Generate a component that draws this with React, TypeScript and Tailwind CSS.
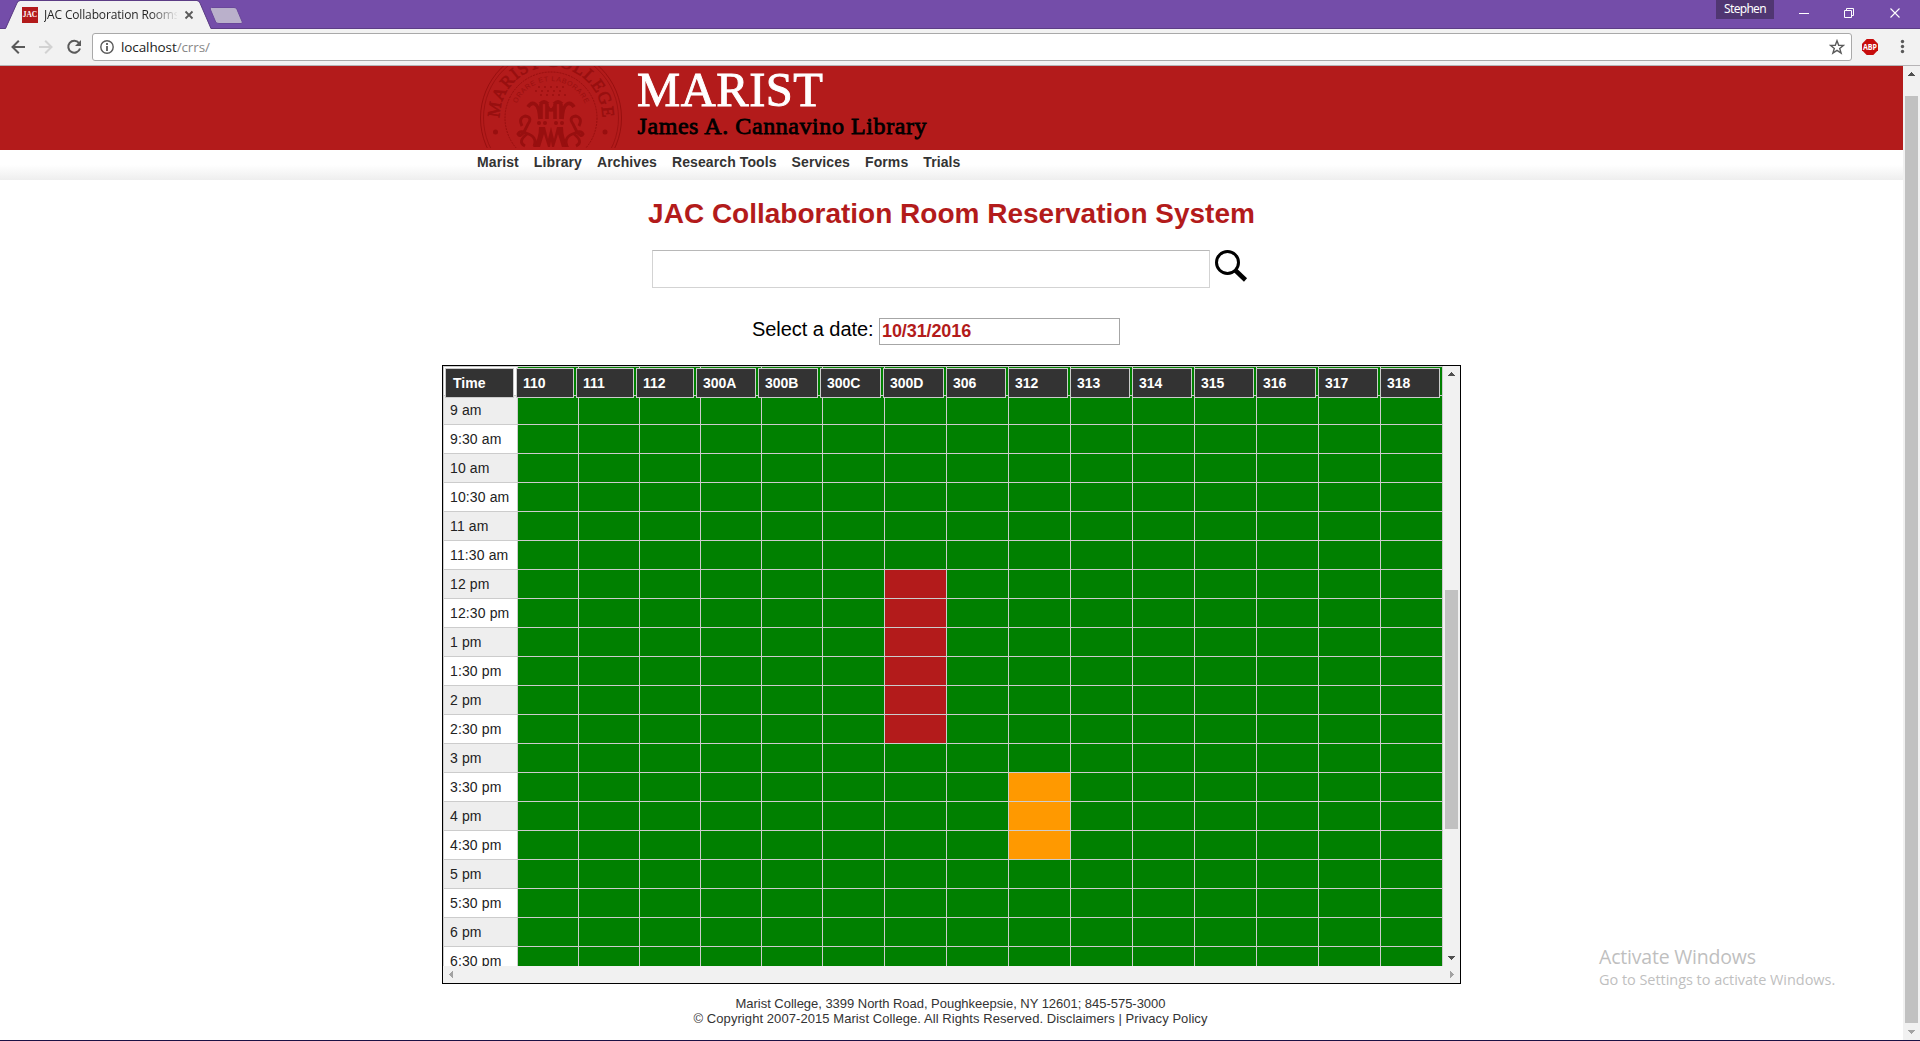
import React from "react";

const rooms = ["110", "111", "112", "300A", "300B", "300C", "300D", "306", "312", "313", "314", "315", "316", "317", "318"];

const times = [
  "8:30 am", "9 am", "9:30 am", "10 am", "10:30 am", "11 am", "11:30 am", "12 pm", "12:30 pm", "1 pm", "1:30 pm",
  "2 pm", "2:30 pm", "3 pm", "3:30 pm", "4 pm", "4:30 pm", "5 pm", "5:30 pm", "6 pm", "6:30 pm",
];

const reserved: Record<string, string[]> = {
  "300D": ["12 pm", "12:30 pm", "1 pm", "1:30 pm", "2 pm", "2:30 pm"],
};
const pending: Record<string, string[]> = {
  "312": ["3:30 pm", "4 pm", "4:30 pm"],
};

const headerSizes = [
  "w-[58px] ml-[2px]", "w-[58px] ml-[2px]", "w-[58px] ml-[2px]", "w-[60px] ml-[2px]", "w-[60px] ml-[2px]", "w-[61px] ml-[2px]",
  "w-[61px] ml-[2px]", "w-[60px] ml-[2px]", "w-[60px] ml-[2px]", "w-[60px] ml-[2px]", "w-[60px] ml-[2px]",
  "w-[60px] ml-[2px]", "w-[60px] ml-[2px]", "w-[60px] ml-[2px]", "w-[60px] ml-[2px]",
];

function cellColor(room: string, time: string) {
  if (reserved[room]?.includes(time)) return "bg-[#b31b1b]";
  if (pending[room]?.includes(time)) return "bg-[#ff9900]";
  return "bg-[#008000]";
}

function Arrow({ dir, color }: { dir: "up" | "down" | "left" | "right"; color: string }) {
  const d = {
    up: "M8 6h1v1h1v1h1v1h1v1H5V9h1V8h1V7h1z",
    down: "M5 7h7v1h-1v1h-1v1H9v1H8v-1H7V9H6V8H5z",
    left: "M6 8h1V7h1V6h1V5h1v7H9v-1H8v-1H7V9H6z",
    right: "M7 5h1v1h1v1h1v1h1v1h-1v1H9v1H8v1H7z",
  }[dir];
  return (
    <svg width="17" height="17" viewBox="0 0 17 17" shapeRendering="crispEdges" className="block shrink-0">
      <path d={d} fill={color} />
    </svg>
  );
}

function BrowserChrome() {
  return (
    <div className="font-['Open_Sans',sans-serif]">
      <div className="relative flex h-[29px] border-b border-[#5c3d85] bg-[#744da9]">
        <svg width="250" height="29" viewBox="0 0 250 29" className="absolute left-0 top-0">
          <path d="M5.500 29 L17 3 Q18 1 20 1 H197 Q199 1 200 3 L211 29 Z" fill="#f2f2f2" />
          <path d="M5.500 28.500 L17 3 Q18 .5 20 .5 H197 Q199 .5 200 3 L211 28.500" fill="none" stroke="#5c3d85" />
          <path d="M211.500 7.500 H234 Q236 7.500 236.800 9 L242.300 22 Q242.800 23.500 241 23.500 H219 Q216.500 23.500 215.700 22 L210.200 9 Q209.800 7.500 211.500 7.500Z" fill="#bab0cb" stroke="#6a479b" />
          <path d="M185.500 11.500l7 7m0-7l-7 7" stroke="#5a5a5a" strokeWidth="1.800" />
        </svg>
        <div className="relative ml-[22px] mt-[7px] flex h-4 w-4 items-center justify-center bg-[#b31b1b] font-['Liberation_Serif',serif] text-[7.500px] font-bold leading-none text-white">JAC</div>
        <div className="relative ml-[6px] mt-[6px] w-[133px] overflow-hidden whitespace-nowrap bg-linear-to-r from-[#222] from-80% to-[#22222210] bg-clip-text text-[12px] leading-[17px] tracking-[-0.150px] text-transparent">JAC Collaboration Rooms</div>
        <div className="ml-auto mr-[146px] h-[19px] w-[58px] bg-[#503672] text-center font-['Noto_Sans',sans-serif] text-[12px] leading-[18px] tracking-[-0.700px] text-white">Stephen</div>
        <svg width="146" height="28" viewBox="0 0 146 28" className="absolute right-0 top-0" fill="none" stroke="#fff">
          <path d="M25 13.500h10" />
          <path d="M70.500 10.500h7v7h-7zM72.500 10.500v-2h7v7h-2" />
          <path d="M116.500 8.500l9 9m0-9l-9 9" strokeWidth="1.100" />
        </svg>
      </div>
      <div className="flex h-[37px] items-start border-b border-[#b6b4b6] bg-[#f2f2f2] pt-1">
        <svg width="92" height="28" viewBox="0 0 92 28" fill="none" strokeWidth="2">
          <path d="M25 14H12.500m6.300-6.300L12.500 14l6.300 6.300" stroke="#5a5a5a" />
          <path d="M39 14h12.500m-6.300-6.300l6.300 6.300-6.300 6.300" stroke="#d2d2d2" />
          <path d="M79 10a6 6 0 1 0 1 5.500" stroke="#5a5a5a" />
          <path d="M81 7v6h-6z" fill="#5a5a5a" />
        </svg>
        <div className="flex h-[28px] w-[1760px] items-center rounded-[3px] border border-[#a9a9a9] bg-white">
          <svg width="14" height="14" viewBox="0 0 14 14" className="ml-[7px]" fill="none" stroke="#5a5a5a">
            <circle cx="7" cy="7" r="6.200" strokeWidth="1.400" />
            <path d="M7 6v5M7 3v2" strokeWidth="1.800" />
          </svg>
          <div className="ml-[7px] text-[13.500px] leading-5 tracking-[-0.100px] text-[#222]">
            localhost<span className="text-[#888]">/crrs/</span>
          </div>
          <svg width="16" height="16" viewBox="0 0 16 16" className="ml-auto mr-[6px]" fill="none" stroke="#5a5a5a" strokeWidth="1.400">
            <path d="M8 1.700l1.700 4.500 4.800.2-3.800 3 1.400 4.700L8 11.400l-4.100 2.700 1.400-4.700-3.800-3 4.800-.2z" />
          </svg>
        </div>
        <svg width="68" height="28" viewBox="0 0 68 28">
          <path d="M14.700 6h6.600l4.700 4.700v6.600L21.300 22h-6.600L10 17.300v-6.600z" fill="#c70d0d" />
          <text x="11" y="17" fontSize="8" fontWeight="700" fill="#fff" textLength="14" lengthAdjust="spacingAndGlyphs">ABP</text>
          <g fill="#5a5a5a"><circle cx="50.500" cy="8.500" r="1.700" /><circle cx="50.500" cy="13.500" r="1.700" /><circle cx="50.500" cy="18.500" r="1.700" /></g>
        </svg>
      </div>
    </div>
  );
}

function Seal() {
  return (
    <svg width="144" height="82" viewBox="0 0 144 82" className="block" fill="none" stroke="#980f0f">
      <defs>
        <path id="outerArc" d="M20.500 52 A51.500 51.500 0 0 1 123.500 52" />
        <path id="innerArc" d="M38 37.500 A37 37 0 0 1 106 37.500" />
      </defs>
      <circle cx="72" cy="52" r="70.500" strokeWidth="1" />
      <circle cx="72" cy="52" r="67.500" strokeWidth="0.800" />
      <circle cx="72" cy="52" r="46" strokeWidth="1" strokeDasharray="2 1" />
      <g fill="#980f0f" stroke="none" className="font-['Liberation_Serif',serif]">
        <text fontSize="17.500" stroke="#980f0f" strokeWidth="0.700"><textPath href="#outerArc" startOffset="0" textLength="161">MARIST COLLEGE</textPath></text>
        <text fontSize="7" className="font-['Liberation_Sans',sans-serif]"><textPath href="#innerArc" startOffset="0" textLength="86">ORARE ET LABORARE</textPath></text>
        <circle cx="16.500" cy="66" r="2.500" />
        <circle cx="126" cy="66" r="2.500" />
        {[60, 66, 72, 78, 84].map((x) => (
          <g key={x}>
            <circle cx={x} cy="21" r="0.900" />
            <circle cx={x - 3} cy="25" r="0.900" />
            <circle cx={x + 2} cy="29" r="0.900" />
          </g>
        ))}
        <circle cx="60" cy="57" r="2" /><circle cx="66" cy="57" r="2" /><circle cx="77" cy="57" r="2" /><circle cx="83" cy="57" r="2" />
        <path d="M60 61h6l3 12 3-12 3 12 3-12h6q0 12 6 20h-7l-4-13-4 13h-2l-1-6-1 6h-2l-4-13-4 13h-7q6-8 6-20z" />
      </g>
      <path d="M49 41q3-5 7-3t5 15M62 38v15M68 38v15M61 38q4-4 8 0M76 38v15M82 38v15M75 38q4-4 8 0M95 41q-3-5-7-3t-5 15M68 40q4 8 8 0" strokeWidth="3.600" />
      <path d="M43 60q-4-8 3-10 8 1 3 8l-4 8q-4 6-6 2 2-4 8-1 12 4 8 13M48 68q-10 8-2 12M100 60q4-8-3-10-8 1-3 8l4 8q4 6 6 2-2-4-8-1-12 4-8 13M95 68q10 8 2 12" strokeWidth="2.800" />
    </svg>
  );
}

function SiteHeader() {
  return (
    <>
      <header className="flex h-[84px] items-start bg-[#b31b1b] pl-[479px]">
        <Seal />
        <svg width="320" height="84" viewBox="0 0 320 84" className="ml-3 font-['Liberation_Serif',serif]">
          <text x="2" y="40" fontSize="48.500" fill="#fff" stroke="#fff" strokeWidth="0.900" textLength="186">MARIST</text>
          <text x="2.500" y="68" fontSize="24" fill="#000" stroke="#000" strokeWidth="0.800" textLength="289">James A. Cannavino Library</text>
        </svg>
      </header>
      <nav className="flex h-[30px] gap-[15px] bg-linear-to-b from-white from-50% to-[#eeeeee] pl-[477px] pt-[2px] text-[14px] font-bold leading-5 tracking-[0.100px] text-[#333]">
        {["Marist", "Library", "Archives", "Research Tools", "Services", "Forms", "Trials"].map((n) => (
          <a key={n}>{n}</a>
        ))}
      </nav>
    </>
  );
}

function Schedule() {
  return (
    <div className="ml-[442px] mt-[20px] h-[619px] w-[1019px] border border-black bg-[#f1f1f1]">
      <div className="flex h-[600px]">
        <div className="relative h-[600px] w-[1000px] overflow-hidden">
          <div className="grid auto-rows-[28px] grid-cols-[73px_repeat(5,60px)_repeat(10,61px)] gap-px bg-[#cccccc] p-px text-[14px] tracking-[0.130px] text-[#222]">
            {times.map((t, i) => (
              <React.Fragment key={t}>
                <div className={i % 2 ? "bg-[#eeeeee] pl-[6px] leading-[28px]" : "bg-white pl-[6px] leading-[28px]"}>{t}</div>
                {rooms.map((r) => (
                  <div key={r} className={cellColor(r, t)} />
                ))}
              </React.Fragment>
            ))}
          </div>
          <div className="absolute left-[2px] top-[2px] flex text-[14px] font-bold leading-[28px] text-white">
            <div className="h-[30px] w-[69px] border border-[#cccccc] bg-[#333333] pl-[7px]">Time</div>
            {rooms.map((r, i) => (
              <div key={r} className={`h-[30px] border border-[#cccccc] bg-[#333333] pl-[6px] ${headerSizes[i]}`}>{r}</div>
            ))}
          </div>
        </div>
        <div className="flex h-[600px] w-[17px] flex-col">
          <Arrow dir="up" color="#505050" />
          <div className="ml-[2px] mt-[207px] h-[239px] w-[13px] bg-[#c1c1c1]" />
          <div className="mt-auto"><Arrow dir="down" color="#505050" /></div>
        </div>
      </div>
      <div className="flex h-[17px] w-[1017px] justify-between">
        <Arrow dir="left" color="#a3a3a3" />
        <Arrow dir="right" color="#a3a3a3" />
      </div>
    </div>
  );
}

export default function App() {
  return (
    <div className="relative flex h-[1041px] w-[1920px] flex-col overflow-hidden border-b border-[#1b1145] bg-white font-['Liberation_Sans',Arial,sans-serif]">
      <BrowserChrome />
      <div className="flex flex-1">
        <main className="w-[1903px]">
          <SiteHeader />
          <h1 className="mt-[16px] text-center text-[28px] font-bold leading-9 text-[#b31b1b]">JAC Collaboration Room Reservation System</h1>
          <div className="ml-[652px] mt-[18px] flex h-[38px]">
            <div className="w-[558px] border border-[#d3d3d3] border-t-[#b8b8b8]" />
            <svg width="34" height="34" viewBox="0 0 34 34" className="ml-1" fill="none" stroke="#000">
              <circle cx="13.500" cy="12.500" r="11" strokeWidth="3" />
              <path d="M21 20l10.500 10" strokeWidth="4.500" />
            </svg>
          </div>
          <div className="ml-[752px] mt-[30px] flex h-[27px] items-center">
            <label className="w-[127px] pb-[5px] text-[20px] leading-6 tracking-[-0.050px] text-black">Select a date:</label>
            <div className="h-[27px] w-[241px] border border-[#a6a6a6] pl-[2px] text-[18px] font-bold leading-[25px] tracking-[-0.100px] text-[#b31b1b]">10/31/2016</div>
          </div>
          <Schedule />
          <footer className="mt-[12px] pr-[2px] text-center text-[13px] leading-[15px] text-[#333]">
            <p className="tracking-[-0.030px]">Marist College, 3399 North Road, Poughkeepsie, NY 12601; 845-575-3000</p>
            <p className="tracking-[0.070px]">© Copyright 2007-2015 Marist College. All Rights Reserved. Disclaimers | Privacy Policy</p>
          </footer>
        </main>
        <div className="flex w-[17px] flex-col bg-[#f1f1f1]">
          <Arrow dir="up" color="#505050" />
          <div className="ml-[2px] mt-[13px] h-[927px] w-[13px] bg-[#c1c1c1]" />
          <div className="mt-auto"><Arrow dir="down" color="#a3a3a3" /></div>
        </div>
      </div>
      <div className="absolute left-[1599px] top-[943px] whitespace-nowrap font-['Open_Sans',sans-serif] text-[#bfbfbf]">
        <div className="text-[19.500px] leading-[27px] tracking-[-0.200px]">Activate Windows</div>
        <div className="text-[14.500px] leading-[20px] tracking-[-0.040px]">Go to Settings to activate Windows.</div>
      </div>
    </div>
  );
}
